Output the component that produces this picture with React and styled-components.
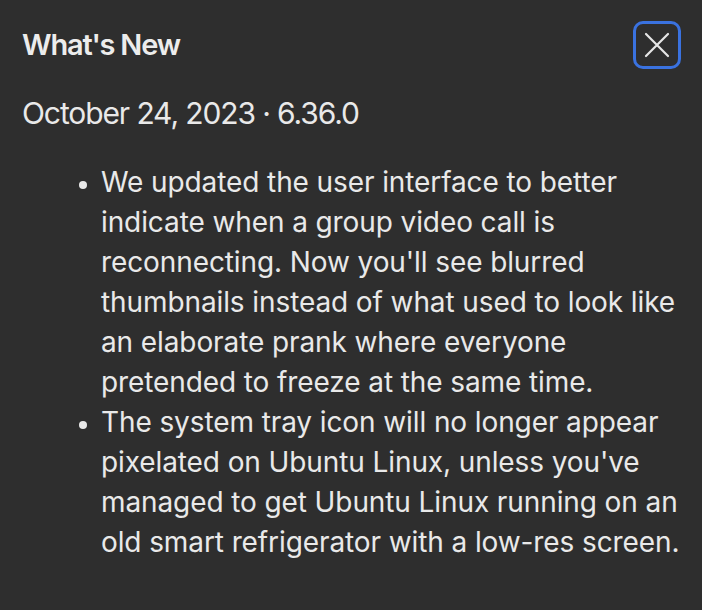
import React from "react";
import styled, { createGlobalStyle } from "styled-components";

const Global = createGlobalStyle`
  html, body { margin: 0; padding: 0; background: #2e2e2e; }
  body { font-family: Inter, "Noto Sans", sans-serif; -webkit-font-smoothing: antialiased; }
`;

const Modal = styled.div`
  width: 702px;
  height: 610px;
  box-sizing: border-box;
  background: #2e2e2e;
  color: #e9e9e9;
  padding: 21px 21px 0 22px;
`;

const Header = styled.div`
  display: flex;
  align-items: center;
  justify-content: space-between;
`;

const Title = styled.h1`
  margin: 0;
  font-size: 29px;
  font-weight: 600;
  line-height: 48px;
  letter-spacing: -1.2px;
  color: #ececec;
`;

const CloseButton = styled.button`
  width: 48px;
  height: 48px;
  box-sizing: border-box;
  border: 3px solid #3a72e0;
  border-radius: 10px;
  background: transparent;
  display: flex;
  align-items: center;
  justify-content: center;
  padding: 0;
  color: #e6e6e6;
`;

const DateLine = styled.div`
  margin-top: 24px;
  font-size: 30px;
  line-height: 40px;
  font-weight: 400;
  letter-spacing: -1.1px;
`;

const List = styled.ul`
  margin: 29px -12px 0 0;
  padding-left: 79px;
  font-size: 28px;
  line-height: 40px;
  letter-spacing: -0.1px;
  li::marker { font-size: 24px; }
`;

const Item = styled.li`
  padding-left: 0;
`;

export default function App() {
  return (
    <>
      <Global />
      <Modal>
        <Header>
          <Title>What's New</Title>
          <CloseButton aria-label="Close">
            <svg width="26" height="26" viewBox="0 0 26 26" fill="none" stroke="currentColor" strokeWidth="2.2" strokeLinecap="round">
              <path d="M2 2 L24 24 M24 2 L2 24" />
            </svg>
          </CloseButton>
        </Header>
        <DateLine>October 24, 2023 · 6.36.0</DateLine>
        <List>
          <Item>
            We updated the user interface to better indicate when a group video call is reconnecting. Now you'll see blurred thumbnails instead of what used to look like an elaborate prank where everyone pretended to freeze at the same time.
          </Item>
          <Item>
            The system tray icon will no longer appear pixelated on Ubuntu Linux, unless you've managed to get Ubuntu Linux running on an old smart refrigerator with a low-res screen.
          </Item>
        </List>
      </Modal>
    </>
  );
}
